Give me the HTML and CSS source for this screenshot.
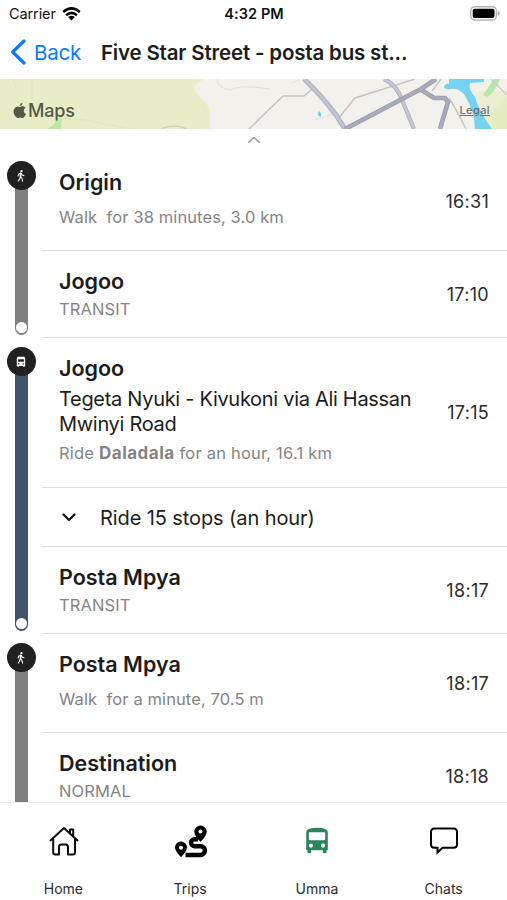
FILE: index.html
```html
<!DOCTYPE html>
<html lang="en">
<head>
<meta charset="utf-8">
<meta name="viewport" content="width=device-width">
<title>Trip details</title>
<link rel="stylesheet" href="styles.css">
</head>
<body>
<svg class="symbols" width="0" height="0" aria-hidden="true">
  <symbol id="walk" viewBox="0 0 10 14">
    <circle cx="5.5" cy="2.2" r="1.15" fill="#fff"/>
    <path d="M4.7 4 L4.3 8 M4.5 4.2 L2.6 5.2 L2.2 7 M5 4.2 L6.2 6 L7.9 6.8 M4.4 7.7 L3.7 9.8 L2.3 12 M4.7 7.7 L6 9.5 L6.6 12.1" fill="none" stroke="#fff" stroke-width="1.1" stroke-linecap="round" stroke-linejoin="round"/>
    <path d="M4 3.8 L5.7 4.1 L5.2 8.1 L3.8 7.9 Z" fill="#fff"/>
  </symbol>
  <symbol id="bus-small" viewBox="0 0 10 12">
    <path fill="#fff" fill-rule="evenodd" d="M2.2 .7 H7.8 Q9.2 .7 9.2 2.3 V10 H8.5 V11 H7.3 V10 H2.7 V11 H1.5 V10 H.8 V2.3 Q.8 .7 2.2 .7 Z M2.1 3.3 V5.8 H7.9 V3.3 Z M2 7.2 V8.6 H3.4 V7.2 Z M6.6 7.2 V8.6 H8 V7.2 Z"/>
  </symbol>
</svg>
<div class="screen">
  <div class="status">
    <div class="carrier"><span>Carrier</span>
      <svg width="19" height="14" viewBox="0 0 19 14"><g fill="none" stroke="#000" stroke-width="2.5"><path d="M1.2 5 Q9.5 -2.2 17.8 5"/><path d="M4.1 8.2 Q9.5 3.6 14.9 8.2"/></g><path d="M6.2 10.1 Q9.5 7.4 12.8 10.1 L9.5 13.6 Z"/></svg>
    </div>
    <div class="clock">4:32 PM</div>
    <svg class="battery" width="31" height="15" viewBox="0 0 31 15"><rect x=".8" y=".8" width="25.6" height="13.2" rx="4" fill="#fff" stroke="#b5b5b5" stroke-width="1.4"/><rect x="2.7" y="2.7" width="21.8" height="9.4" rx="2"/><path d="M27.8 5 Q29.8 5.8 29.8 7.4 Q29.8 9 27.8 9.8 Z" fill="#aaa"/></svg>
  </div>
  <div class="navbar">
    <svg width="16" height="26" viewBox="0 0 16 26"><path d="M14 2 L2.6 13 L14 24" fill="none" stroke="#0a7aff" stroke-width="3.2" stroke-linecap="round" stroke-linejoin="round"/></svg>
    <span class="back">Back</span>
    <span class="title">Five Star Street - posta bus st...</span>
  </div>
  <div class="map">
    <svg class="map-art" width="507" height="50" viewBox="0 0 507 50">
      <rect width="507" height="50" fill="#f2f1ec"/>
      <path d="M0 0 H204 L196 5 Q192 11 198 16 Q209 24 210 35 V50 H0 Z" fill="#e8edc7"/>
      <path d="M48 50 Q54 46 57 41 L62 38 L61 50 Z" fill="#bde3a5"/>
      <path d="M13 0 L17 10 M32 0 V20 M60 39 L85 41 L130 50" fill="none" stroke="#dfe4c3" stroke-width="1"/>
      <path d="M161 50 Q174 44 187 50" fill="none" stroke="#cfd0bf" stroke-width="1.6"/>
      <path d="M217 0 Q217 9 230 11 Q239 7 253 8 L270 10 M315 41 L335 34 M300 0 L292 4" fill="none" stroke="#e2dfd9" stroke-width="1"/>
      <path d="M249 50 L283 17 L304 17 L312 10 M338 40 L355 19 L415 0" fill="none" stroke="#c3c3cc" stroke-width="1.5"/>
      <path d="M319 32 Q322 34 320.5 38 Q316.5 36 319 32 Z" fill="#62cbed"/>
      <path d="M304 0 Q322 17 336 36 L345 50" fill="none" stroke="#aeb0bf" stroke-width="5"/>
      <path d="M304 0 Q322 17 336 36 L345 50" fill="none" stroke="#c2c3cf" stroke-width="2.8"/>
      <path d="M384 0 Q397 6 402 21 L414 50" fill="none" stroke="#b0b1bf" stroke-width="4.2"/>
      <path d="M384 0 Q397 6 402 21 L414 50" fill="none" stroke="#c5c6d1" stroke-width="2.4"/>
      <path d="M441 0 L432 12 M449 19 Q455 28 466 50" fill="none" stroke="#c4c4cb" stroke-width="1.4"/>
      <path d="M345 50 L421 10 L436 0 M420 10 L434 19 H445 L448 23 L440 50" fill="none" stroke="#9b9cae" stroke-width="4.6"/>
      <path d="M345 50 L421 10 L436 0 M420 10 L434 19 H445 L448 23 L440 50" fill="none" stroke="#a9aabb" stroke-width="2.8"/>
      <path d="M475 12 H507 V50 H490 Z" fill="#edeed0"/>
      <path d="M483 16 L494 0 H500 Q496 11 488 18 Z" fill="#b5e7ac"/>
      <path d="M493 50 L488 35 L507 19 V50 Z" fill="#e5ecc0"/>
      <path d="M449 0 H484 V3 L470 4 Q468 10 475 18 Q480 34 492 50 H475 Q475 33 464 15 Q458 9 451 10 Q445 11 444 8 Q445 4 449 5 Z" fill="#76d2f1"/>
      <path d="M491 0 L507 16" fill="none" stroke="#c8ccc0" stroke-width="1.5"/>
    </svg>
    <div class="map-labels">
      <div class="brand"><svg width="14" height="17" viewBox="0 0 14 17"><path fill="#555947" d="M7 5 Q9.8 3.4 12.6 5.8 Q10.6 7 10.8 9.2 Q11 11.1 13 12 Q11.2 16.3 9.2 16.1 Q7.1 15 5.2 16 Q3.5 16.5 1.8 13.6 Q-.2 10 1 7.2 Q2.8 3.6 7 5 Z M6.8 4.2 Q6.6 1.5 9.5 .5 Q9.8 3.4 6.8 4.2 Z"/></svg><span>Maps</span></div>
      <span class="legal">Legal</span>
    </div>
  </div>
  <div class="handle"><svg width="14" height="8" viewBox="0 0 14 8"><path d="M1.3 6.8 L7 1.3 L12.7 6.8" fill="none" stroke="#8b8b8b" stroke-width="1.3"/></svg></div>
  <div class="steps">
    <section class="leg">
      <div class="rail"><span class="mode"><svg width="10" height="14"><use href="#walk"/></svg></span><span class="bar"><i class="dot"></i></span></div>
      <div class="rows">
        <div class="row tall"><div class="info"><h2>Origin</h2><p class="sub">Walk&nbsp; for 38 minutes, 3.0 km</p></div><time>16:31</time></div>
        <div class="row"><div class="info"><h2>Jogoo</h2><p class="sub">TRANSIT</p></div><time>17:10</time></div>
      </div>
    </section>
    <section class="leg">
      <div class="rail ride"><span class="mode"><svg width="10" height="12"><use href="#bus-small"/></svg></span><span class="bar"><i class="dot"></i></span></div>
      <div class="rows">
        <div class="row route-row"><div class="info"><h2>Jogoo</h2><p class="route">Tegeta Nyuki - Kivukoni via Ali Hassan<br>Mwinyi Road</p><p class="sub">Ride <b>Daladala</b> for an hour, 16.1 km</p></div><time>17:15</time></div>
        <div class="row stops"><svg width="14" height="9" viewBox="0 0 14 9"><path d="M1.5 1.5 L7 7 L12.5 1.5" fill="none" stroke="#111" stroke-width="2.2" stroke-linecap="round" stroke-linejoin="round"/></svg><span>Ride 15 stops (an hour)</span></div>
        <div class="row"><div class="info"><h2>Posta Mpya</h2><p class="sub">TRANSIT</p></div><time>18:17</time></div>
      </div>
    </section>
    <section class="leg">
      <div class="rail"><span class="mode"><svg width="10" height="14"><use href="#walk"/></svg></span><span class="bar"><i class="dot"></i></span></div>
      <div class="rows">
        <div class="row tall"><div class="info"><h2>Posta Mpya</h2><p class="sub">Walk&nbsp; for a minute, 70.5 m</p></div><time>18:17</time></div>
        <div class="row"><div class="info"><h2>Destination</h2><p class="sub">NORMAL</p></div><time>18:18</time></div>
      </div>
    </section>
  </div>
  <nav class="tabs">
    <div class="tab"><svg width="34" height="36" viewBox="0 0 34 36"><path d="M4.5 16.5 L18 4 L31.5 16.5 M7.2 15 V28.5 Q7.2 30.5 9.2 30.5 H13 V23 Q13 20.5 15.5 20.5 H19.5 Q22 20.5 22 23 V30.5 H27 Q29 30.5 29 28.5 V15 M24 8.7 V5.5 H27.2 V11.5" fill="none" stroke="#0a0a0a" stroke-width="2" stroke-linecap="round" stroke-linejoin="round"/></svg><span>Home</span></div>
    <div class="tab"><svg width="34" height="36" viewBox="0 0 34 36"><path fill-rule="evenodd" d="M27.5 1.6 A6.2 6.2 0 0 1 33.7 7.8 Q33.7 11.6 27.5 18.1 Q21.3 11.6 21.3 7.8 A6.2 6.2 0 0 1 27.5 1.6 Z M27.5 5.6 A2 2 0 1 0 27.5 9.6 A2 2 0 0 0 27.5 5.6 Z M8 17.6 A6 6 0 0 1 14 23.6 Q14 27.1 8 33.3 Q2 27.1 2 23.6 A6 6 0 0 1 8 17.6 Z M8 21.7 A2 2 0 1 0 8 25.7 A2 2 0 0 0 8 21.7 Z"/><path d="M25 15.2 H21.6 A3.5 3.5 0 0 0 21.6 22.2 H27.5 A4.4 4.4 0 0 1 27.5 31 H12.5" fill="none" stroke="#000" stroke-width="4.4"/></svg><span>Trips</span></div>
    <div class="tab"><svg width="34" height="36" viewBox="0 0 34 36"><path fill="#2c845c" fill-rule="evenodd" d="M6.2 8.2 Q6.2 3.7 17 3.7 Q27.8 3.7 27.8 8.2 V26.2 H26.5 V28.2 Q26.5 29.2 25.5 29.2 H24 Q23 29.2 23 28.2 V26.2 H11 V28.2 Q11 29.2 10 29.2 H8.5 Q7.5 29.2 7.5 28.2 V26.2 H6.2 Z M9.5 8.2 Q8.8 8.2 8.8 9 V15 Q8.8 16.2 10 16.2 H24 Q25.2 16.2 25.2 15 V9 Q25.2 8.2 24.5 8.2 Z M11 19.5 A2.1 2.1 0 1 0 11 23.7 A2.1 2.1 0 0 0 11 19.5 Z M23 19.5 A2.1 2.1 0 1 0 23 23.7 A2.1 2.1 0 0 0 23 19.5 Z"/></svg><span>Umma</span></div>
    <div class="tab"><svg width="34" height="36" viewBox="0 0 34 36"><path d="M7.5 4.5 H26.5 Q30 4.5 30 8 V20.2 Q30 23.7 26.5 23.7 H15.5 L10.5 28.5 V23.7 H7.5 Q4 23.7 4 20.2 V8 Q4 4.5 7.5 4.5 Z" fill="none" stroke="#000" stroke-width="2"/></svg><span>Chats</span></div>
  </nav>
</div>
</body>
</html>
```
FILE: styles.css
```css
* { box-sizing: border-box; }
body { margin: 0; background: #fff; color: #1c1c1c; font-family: Inter, "Liberation Sans", sans-serif; }
h2, p { margin: 0; }
svg { display: block; flex: none; }
span, h2, p, time, .clock { white-space: nowrap; }
.symbols { position: absolute; }
.screen { width: 507px; height: 900px; overflow: hidden; display: flex; flex-direction: column; }
.status { flex: none; height: 27px; display: grid; grid-template-columns: 1fr auto 1fr; align-items: center; padding: 0 6px 0 9px; color: #111; }
.carrier { display: flex; align-items: center; gap: 6px; font-size: 14.5px; letter-spacing: -0.1px; }
.clock { font-size: 14.5px; font-weight: 600; letter-spacing: 0.1px; margin-right: 2px; }
.battery { justify-self: end; }
.navbar { flex: none; height: 52px; display: flex; align-items: center; padding: 0 0 2px 10px; }
.back { margin-left: 8px; width: 67px; color: #0a7aff; font-size: 20.5px; letter-spacing: -0.2px; }
.title { font-size: 20.5px; font-weight: 600; letter-spacing: -0.18px; }
.map { flex: none; height: 50px; display: grid; }
.map-art, .map-labels { grid-area: 1 / 1; }
.map-labels { display: flex; justify-content: space-between; align-items: center; padding: 12px 17px 0 13px; z-index: 1; }
.brand { display: flex; align-items: center; gap: 1px; color: #555947; font-size: 18px; font-weight: 500; letter-spacing: -0.2px; }
.legal { font-size: 11px; font-weight: 500; color: #6b7074; text-decoration: underline; letter-spacing: 0.4px; }
.handle { flex: none; height: 23px; display: flex; justify-content: center; padding-top: 7px; }
.steps { flex: 1; min-height: 0; overflow: hidden; }
.leg { display: flex; }
.rail { width: 42px; flex: none; padding: 9px 0 3px; display: flex; flex-direction: column; align-items: center; }
.mode { width: 29px; height: 29px; flex: none; border-radius: 50%; background: #202020; display: flex; align-items: center; justify-content: center; z-index: 1; }
.bar { width: 13px; flex: 1; margin-top: -3px; border-radius: 0 0 7px 7px; background: #808080; display: flex; align-items: flex-end; justify-content: center; padding-bottom: 2px; }
.ride .bar { background: #42526a; }
.dot { width: 11px; height: 11px; border-radius: 50%; background: #fff; }
.rows { flex: 1; }
.row { height: 87px; border-bottom: 1px solid #dfdfdf; padding: 0 18px 0 17px; display: flex; justify-content: space-between; align-items: center; }
.info { align-self: flex-start; padding-top: 16px; }
.tall { height: 99px; }
.route-row { height: 150px; }
h2 { font-size: 21.5px; font-weight: 600; line-height: 28px; letter-spacing: 0; }
.sub { color: #848484; font-size: 16.5px; line-height: 27px; margin-top: 1px; letter-spacing: 0.1px; }
.sub b { font-size: 17px; letter-spacing: 0.5px; }
.tall .sub { margin-top: 8px; }
.route { font-size: 20px; line-height: 25px; margin-top: 5px; letter-spacing: -0.3px; }
.route-row .sub { margin-top: 3px; letter-spacing: 0.2px; }
.row time { font-size: 18px; letter-spacing: 0.3px; color: #2b2b2b; }
.stops { height: 59px; justify-content: flex-start; gap: 24px; padding-left: 20px; font-size: 20px; letter-spacing: -0.1px; }
.stops span { padding-top: 1px; }
.tabs { flex: none; height: 98px; border-top: 1px solid #ececec; display: flex; }
.tab { width: 25%; display: flex; flex-direction: column; align-items: center; padding-top: 21px; color: #2b2b2b; font-size: 14px; line-height: 20px; }
.tab span { margin-top: 19px; }
```
